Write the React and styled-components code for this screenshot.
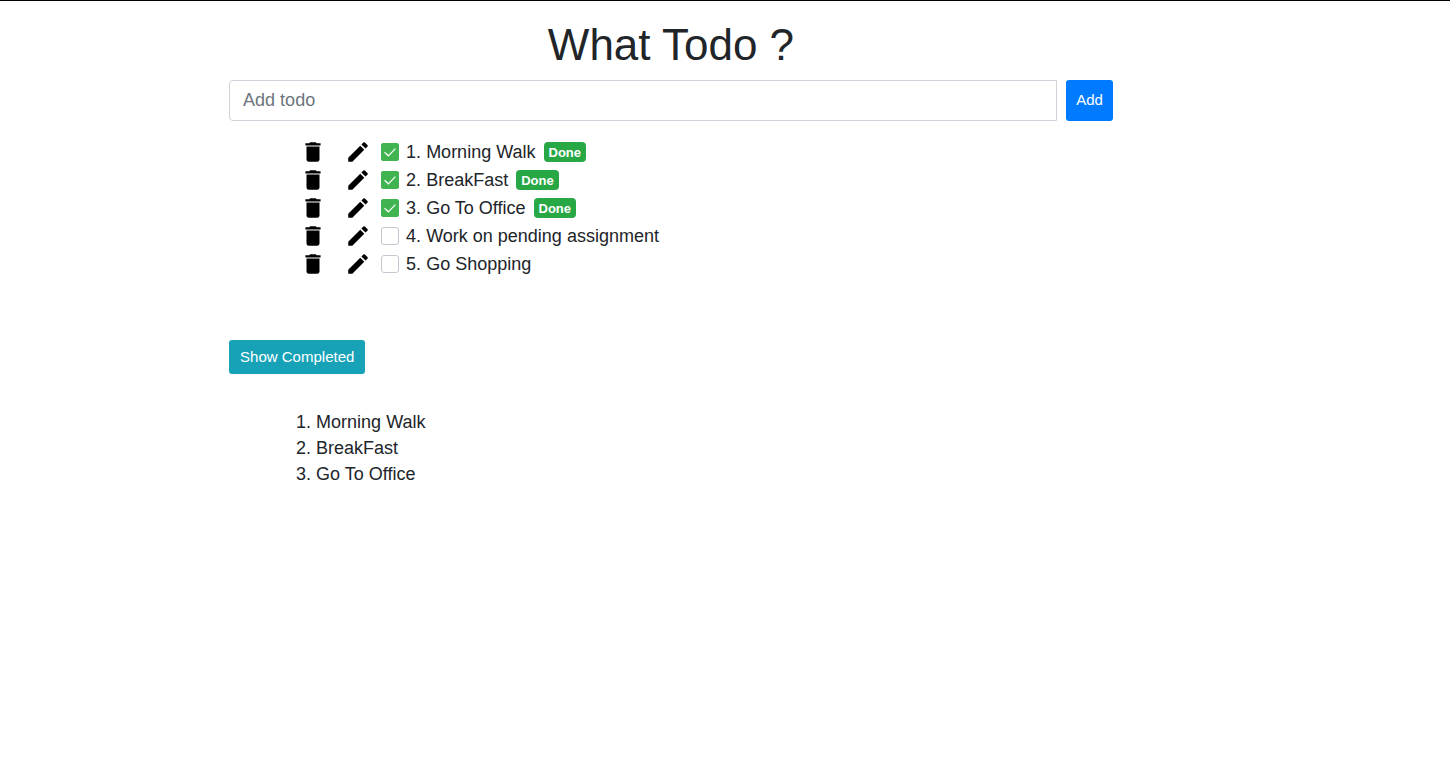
import React, { useState } from "react";
import styled, { createGlobalStyle } from "styled-components";
import { MdDelete, MdEdit } from "react-icons/md";

const GlobalStyle = createGlobalStyle`
  *, *::before, *::after { box-sizing: border-box; }
  body {
    margin: 0;
    background: #fff;
    color: #212529;
    font-family: "Liberation Sans", Arial, sans-serif;
    font-size: 18px;
    line-height: 26px;
  }
`;

const Page = styled.div`
  border-top: 1px solid #000;
  padding-top: 17px;
`;

const Main = styled.main`
  width: 60.95%;
  margin-left: 15.8%;
`;

const Title = styled.h1`
  margin: 0 0 9px;
  font-size: 44px;
  font-weight: 400;
  line-height: 53px;
  text-align: center;
`;

const AddForm = styled.form`
  display: flex;
  gap: 9px;
  margin-bottom: 17px;
`;

const TodoInput = styled.input`
  flex: 1;
  min-width: 0;
  height: 41px;
  padding: 0 13px;
  border: 1px solid #ced4da;
  border-radius: 4px 0 0 4px;
  background: #fff;
  color: #495057;
  font: inherit;
  &::placeholder { color: #6c757d; opacity: 1; }
`;

const Button = styled.button`
  padding: ${(p) => (p.$info ? "4px 11px" : "3px 10px 4px")};
  border: 0;
  border-radius: 3px;
  background: ${(p) => (p.$info ? "#17a2b8" : "#007bff")};
  color: #fff;
  font-family: inherit;
  font-size: 15px;
  line-height: 26px;
  cursor: pointer;
`;

const TodoList = styled.ul`
  margin: 0 0 62px;
  padding: 0 0 0 71px;
  list-style: none;
`;

const TodoRow = styled.li`
  display: flex;
  align-items: center;
  height: 28px;
`;

const IconButton = styled.button`
  display: flex;
  margin-right: ${(p) => (p.$wide ? 19 : 10)}px;
  padding: 0;
  border: 0;
  background: none;
  color: #000;
  cursor: pointer;
`;

const TodoLabel = styled.label`
  display: flex;
  align-items: center;
  gap: 7px;
`;

const CheckWrap = styled.span`
  display: grid;
  width: 18px;
  height: 18px;
  > * { grid-area: 1 / 1; }
  svg { pointer-events: none; z-index: 1; }
`;

const CheckInput = styled.input`
  appearance: none;
  width: 18px;
  height: 18px;
  margin: 0;
  border: 1px solid #c3c8d0;
  border-radius: 3px;
  background: #fff;
  &:checked {
    border-color: #40b450;
    border-radius: 2px;
    background: #40b450;
  }
`;

const Badge = styled.span`
  margin-left: 8px;
  padding: 1px 5px 0;
  border-radius: 4px;
  background: #28a745;
  color: #fff;
  font-size: 13px;
  font-weight: 700;
  line-height: 19px;
`;

const CompletedList = styled.ol`
  margin: 35px 0 0;
  padding: 0 0 0 87px;
`;

const initialTodos = [
  { title: "Morning Walk", done: true },
  { title: "BreakFast", done: true },
  { title: "Go To Office", done: true },
  { title: "Work on pending assignment", done: false },
  { title: "Go Shopping", done: false },
];

function Checkbox({ checked, onChange }) {
  return (
    <CheckWrap>
      <CheckInput type="checkbox" checked={checked} onChange={onChange} />
      {checked && (
        <svg width="18" height="18" viewBox="0 0 18 18" fill="none" stroke="#fff" strokeWidth="1.2" aria-hidden="true">
          <path d="M3.6 9.2 7.4 12.8 14.4 5.6" />
        </svg>
      )}
    </CheckWrap>
  );
}

export default function App() {
  const [todos, setTodos] = useState(initialTodos);
  const [text, setText] = useState("");
  const [showCompleted, setShowCompleted] = useState(true);

  const addTodo = (e) => {
    e.preventDefault();
    if (!text.trim()) return;
    setTodos([...todos, { title: text.trim(), done: false }]);
    setText("");
  };
  const toggle = (i) =>
    setTodos(todos.map((t, n) => (n === i ? { ...t, done: !t.done } : t)));
  const remove = (i) => setTodos(todos.filter((_, n) => n !== i));
  const edit = (i) => {
    setText(todos[i].title);
    remove(i);
  };

  return (
    <Page>
      <GlobalStyle />
      <Main>
        <Title>What Todo ?</Title>
        <AddForm onSubmit={addTodo}>
          <TodoInput
            type="text"
            aria-label="Add todo"
            placeholder="Add todo"
            value={text}
            onChange={(e) => setText(e.target.value)}
          />
          <Button type="submit">Add</Button>
        </AddForm>
        <TodoList>
          {todos.map((todo, i) => (
            <TodoRow key={todo.title}>
              <IconButton $wide type="button" aria-label="Delete" onClick={() => remove(i)}>
                <MdDelete size={26} />
              </IconButton>
              <IconButton type="button" aria-label="Edit" onClick={() => edit(i)}>
                <MdEdit size={26} />
              </IconButton>
              <TodoLabel>
                <Checkbox checked={todo.done} onChange={() => toggle(i)} />
                <span>{i + 1}. {todo.title}</span>
              </TodoLabel>
              {todo.done && <Badge>Done</Badge>}
            </TodoRow>
          ))}
        </TodoList>
        <Button $info type="button" onClick={() => setShowCompleted(!showCompleted)}>
          Show Completed
        </Button>
        {showCompleted && (
          <CompletedList>
            {todos.filter((t) => t.done).map((t) => (
              <li key={t.title}>{t.title}</li>
            ))}
          </CompletedList>
        )}
      </Main>
    </Page>
  );
}
